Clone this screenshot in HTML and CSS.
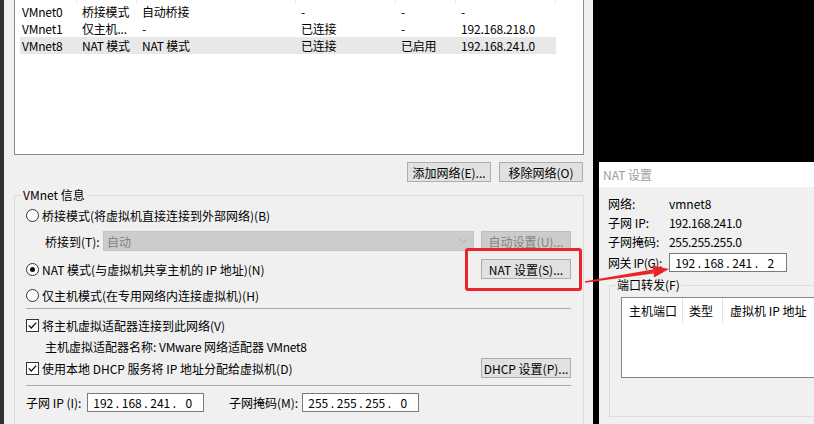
FILE: index.html
```html
<!DOCTYPE html>
<html lang="zh-CN">
<head>
<meta charset="utf-8">
<title>虚拟网络编辑器 - NAT 设置</title>
<link rel="stylesheet" href="styles.css">
</head>
<body>
<div class="screen">
  <div class="main">
    <div class="listbox">
      <div class="lv-head"><span></span><span></span><span></span><span></span><span></span><span></span></div>
      <div class="lv-row"><span>VMnet0</span><span>桥接模式</span><span>自动桥接</span><span>-</span><span>-</span><span>-</span></div>
      <div class="lv-row"><span>VMnet1</span><span>仅主机...</span><span>-</span><span>已连接</span><span>-</span><span>192.168.218.0</span></div>
      <div class="lv-row sel"><span>VMnet8</span><span>NAT 模式</span><span>NAT 模式</span><span>已连接</span><span>已启用</span><span>192.168.241.0</span></div>
    </div>
    <div class="btnrow">
      <button class="btn w84">添加网络(E)...</button>
      <button class="btn w84">移除网络(O)</button>
    </div>
    <fieldset class="group">
      <legend>VMnet 信息</legend>
      <div class="gbody">
        <div class="row"><span class="radio"></span><span>桥接模式(将虚拟机直接连接到外部网络)(B)</span></div>
        <div class="row r-bridge">
          <span class="lbl-bridge">桥接到(T):</span>
          <div class="select"><span>自动</span>
            <svg class="chev" width="9" height="6" viewBox="0 0 9 6"><polyline points="0.5,0.8 4.5,4.8 8.5,0.8" fill="none" stroke="#a8a8a8" stroke-width="1"/></svg>
          </div>
          <button class="btn w90 push disabled">自动设置(U)...</button>
        </div>
        <div class="row r-nat"><span class="radio on"></span><span>NAT 模式(与虚拟机共享主机的 IP 地址)(N)</span>
          <button class="btn w90 push">NAT 设置(S)...</button>
        </div>
        <div class="row r-host"><span class="radio"></span><span>仅主机模式(在专用网络内连接虚拟机)(H)</span></div>
        <div class="sep s1"></div>
        <div class="row r-chk1"><span class="check"><svg width="11" height="11" viewBox="0 0 11 11"><polyline points="1.8,5.4 4.3,8 9.2,2.6" fill="none" stroke="#111" stroke-width="1.3"/></svg></span><span>将主机虚拟适配器连接到此网络(V)</span></div>
        <div class="row r-adapter"><span>主机虚拟适配器名称: <span class="lat">VMware</span> 网络适配器 <span class="lat">VMnet8</span></span></div>
        <div class="row r-dhcp"><span class="check"><svg width="11" height="11" viewBox="0 0 11 11"><polyline points="1.8,5.4 4.3,8 9.2,2.6" fill="none" stroke="#111" stroke-width="1.3"/></svg></span><span>使用本地 DHCP 服务将 IP 地址分配给虚拟机(D)</span>
          <button class="btn w90 push">DHCP 设置(P)...</button>
        </div>
        <div class="sep s2"></div>
        <div class="row r-subnet">
          <span class="lbl-ip">子网 IP (I):</span>
          <div class="ipbox"><span class="oct">192</span><span class="dot">.</span><span class="oct">168</span><span class="dot">.</span><span class="oct">241</span><span class="dot">.</span><span class="oct">0</span></div>
          <span class="lbl-mask">子网掩码(M):</span>
          <div class="ipbox"><span class="oct">255</span><span class="dot">.</span><span class="oct">255</span><span class="dot">.</span><span class="oct">255</span><span class="dot">.</span><span class="oct">0</span></div>
        </div>
      </div>
    </fieldset>
  </div>

  <div class="side">
    <div class="blackfill"></div>
    <div class="dialog">
      <div class="title">NAT 设置</div>
      <div class="dbody">
        <div class="info"><span class="k">网络:</span><span>vmnet8</span></div>
        <div class="info"><span class="k">子网 IP:</span><span class="lat">192.168.241.0</span></div>
        <div class="info"><span class="k">子网掩码:</span><span class="lat">255.255.255.0</span></div>
        <div class="info gw"><span class="k gwk">网关 IP(G):</span>
          <div class="ipbox gwbox"><span class="oct">192</span><span class="dot">.</span><span class="oct">168</span><span class="dot">.</span><span class="oct">241</span><span class="dot">.</span><span class="oct">2</span></div>
        </div>
        <fieldset class="ports">
          <legend>端口转发(F)</legend>
          <div class="plist">
            <div class="phead"><span class="pc1">主机端口</span><span class="pc2">类型</span><span class="pc3">虚拟机 IP 地址</span></div>
          </div>
        </fieldset>
      </div>
    </div>
  </div>

  <div class="redbox"></div>
  <svg class="arrow" width="95" height="26" viewBox="0 0 95 26">
    <polygon points="4.9,21.2 72.9,9.5 73.5,13.4 5.1,22.8" fill="#e8262a"/>
    <polygon points="89,9 72.3,5.5 74.1,17.4" fill="#e8262a"/>
  </svg>
</div>
</body>
</html>
```
FILE: styles.css
```css
html, body {
  margin: 0;
  padding: 0;
  background: #000;
  overflow: hidden;
}
body {
  font-family: "Noto Sans CJK SC", "Liberation Sans", sans-serif;
  font-size: 12px;
  color: #000;
}
.lat {
  letter-spacing: -0.3px;
}
.screen {
  width: 814px;
  height: 424px;
  display: flex;
  overflow: hidden;
  background: #000;
  position: relative;
}
.main {
  width: 593px;
  height: 424px;
  flex: none;
  box-sizing: border-box;
  border-left: 4px solid #303030;
  background: #f0f0f0;
  overflow: hidden;
}

/* list view */
.listbox {
  margin-left: 10px;
  width: 570px;
  height: 155px;
  box-sizing: border-box;
  border: 1px solid #8c8c8c;
  border-top: none;
  background: #fff;
}
.lv-head {
  display: grid;
  grid-template-columns: 62px 60px 159px 100px 60px 100px;
  height: 3px;
}
.lv-head span {
  border-right: 1px solid #e3e3e3;
}
.lv-row {
  display: grid;
  grid-template-columns: 56px 60px 159px 100px 60px 100px;
  margin-left: 5px;
  width: 536px;
  height: 17px;
  line-height: 17px;
  white-space: nowrap;
  letter-spacing: -0.2px;
}
.lv-row span {
  padding-left: 6px;
  overflow: hidden;
}
.lv-row span:first-child {
  padding-left: 2px;
}
.lv-row.sel {
  background: #e8e8e8;
}

/* buttons */
.btn {
  height: 20px;
  box-sizing: border-box;
  border: 1px solid #adadad;
  background: #e1e1e1;
  font: inherit;
  color: #000;
  padding: 0;
  line-height: 17px;
  white-space: nowrap;
}
.w84 { width: 84px; }
.w90 { width: 90px; }
.push { margin-left: auto; }
.btn.disabled {
  background: #cccccc;
  border-color: #bfbfbf;
  color: #838383;
}
.btnrow {
  display: flex;
  justify-content: flex-end;
  gap: 8px;
  margin-top: 7px;
  padding-right: 10px;
}

/* group box */
.group {
  margin: 5px 0 0 10px;
  width: 570px;
  height: 260px;
  box-sizing: border-box;
  border: 1px solid #dcdcdc;
  padding: 2px 12px 0 6px;
  min-width: 0;
}
.group legend, .ports legend {
  padding: 0 2px;
  line-height: 16px;
}
.gbody {
  margin-left: 5px;
}
.row {
  display: flex;
  align-items: center;
  height: 20px;
  white-space: nowrap;
}
.r-bridge { margin-top: 6px; padding-left: 19px; }
.r-nat { margin-top: 8px; }
.r-host { margin-top: 6px; }
.r-chk1 { margin-top: 6px; }
.r-adapter { margin-top: 1px; padding-left: 19px; }
.r-dhcp { margin-top: 2px; }
.r-subnet { margin-top: 7px; height: 19px; }
.sep {
  height: 1px;
  background: #aaaaaa;
}
.s1 { margin-top: 3px; }
.s2 { margin-top: 7px; }

.radio {
  width: 13px;
  height: 13px;
  box-sizing: border-box;
  border: 1px solid #333;
  border-radius: 50%;
  background: #fff;
  margin-right: 3px;
  flex: none;
}
.radio.on::after {
  content: "";
  display: block;
  width: 5px;
  height: 5px;
  border-radius: 50%;
  background: #111;
  margin: 3px;
}
.check {
  width: 13px;
  height: 13px;
  box-sizing: border-box;
  border: 1px solid #333;
  background: #fff;
  margin-right: 3px;
  flex: none;
  display: flex;
}

.lbl-bridge { width: 58px; flex: none; }
.select {
  width: 371px;
  height: 20px;
  box-sizing: border-box;
  border: 1px solid #c4c4c4;
  background: #cccccc;
  color: #838383;
  display: flex;
  align-items: center;
  padding-left: 3px;
  flex: none;
}
.chev {
  margin-left: auto;
  margin-right: 5px;
}

.lbl-ip { width: 61px; flex: none; }
.lbl-mask { width: 73px; flex: none; margin-left: 25px; }
.ipbox {
  width: 117px;
  height: 19px;
  box-sizing: border-box;
  border: 1px solid #7a7a7a;
  background: #fff;
  display: flex;
  align-items: center;
  padding-left: 4px;
  flex: none;
  line-height: 17px;
}
.oct {
  width: 22.5px;
  text-align: center;
}
.dot {
  width: 6px;
  text-align: center;
}

/* right side: NAT dialog */
.side {
  width: 221px;
  flex: none;
  display: flex;
  flex-direction: column;
}
.blackfill {
  height: 162px;
  flex: none;
}
.dialog {
  margin-left: 6px;
  flex: 1;
  background: #f0f0f0;
  overflow: hidden;
}
.title {
  height: 25px;
  line-height: 25px;
  background: #fff;
  color: #9c9c9c;
  padding-left: 4px;
  white-space: nowrap;
}
.dbody {
  padding: 7px 0 0 9px;
  width: 400px;
}
.info {
  display: flex;
  align-items: center;
  height: 19px;
  white-space: nowrap;
}
.info .k {
  width: 61px;
  flex: none;
}
.info .gwk {
  letter-spacing: -0.4px;
}
.gw { margin-top: 2px; }
.gwbox { width: 118px; }
.ports {
  margin: 5px 0 0 1px;
  width: 360px;
  height: 140px;
  box-sizing: border-box;
  border: 1px solid #dcdcdc;
  padding: 4px 0 0 6px;
  min-width: 0;
}
.ports legend { padding: 0 1px; }
.plist {
  margin-left: 5px;
  width: 340px;
  height: 81px;
  box-sizing: border-box;
  border: 1px solid #828790;
  background: #fff;
}
.phead {
  display: flex;
  height: 25px;
  line-height: 25px;
  white-space: nowrap;
}
.phead span {
  box-sizing: border-box;
  padding-left: 7px;
}
.pc1 { width: 61px; border-right: 1px solid #e3e3e3; }
.pc2 { width: 40px; border-right: 1px solid #e3e3e3; padding-left: 6px !important; }
.pc3 { flex: 1; }

/* annotation overlays */
.redbox {
  position: absolute;
  left: 465px;
  top: 248px;
  width: 117px;
  height: 43px;
  box-sizing: border-box;
  border: 3px solid #e8262a;
  border-radius: 3px;
}
.arrow {
  position: absolute;
  left: 580px;
  top: 260px;
}
```
